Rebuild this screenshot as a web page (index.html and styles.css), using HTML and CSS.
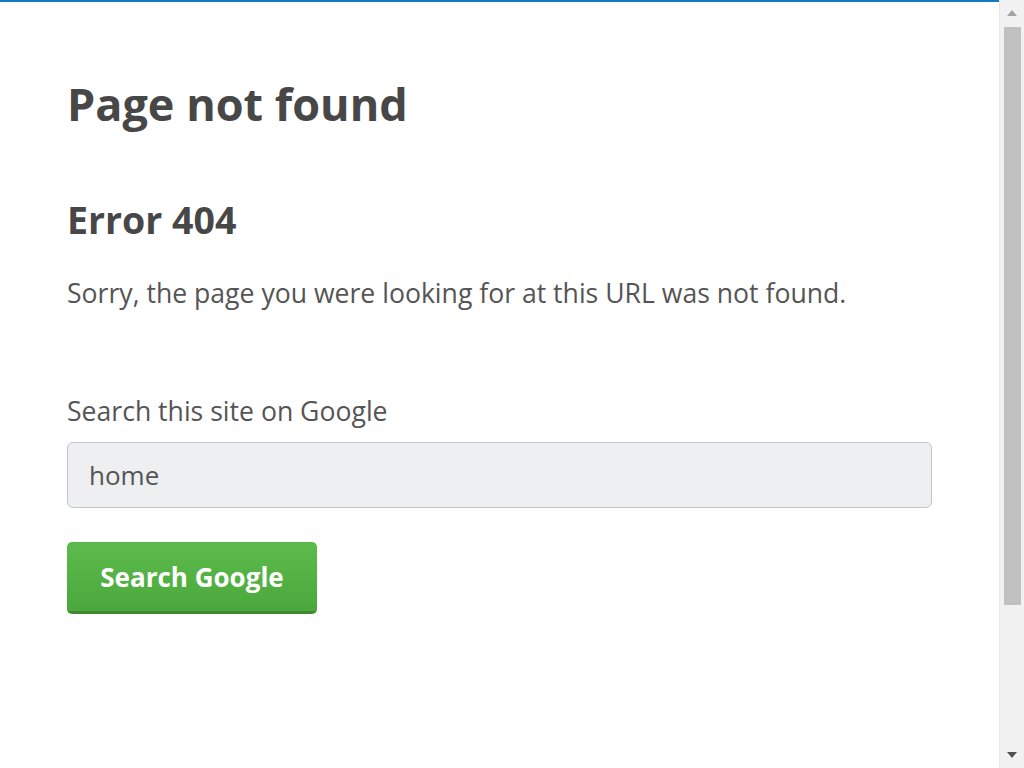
FILE: index.html
```html
<!DOCTYPE html>
<html lang="en">
<head>
<meta charset="utf-8">
<title>Page not found</title>
<link rel="stylesheet" href="styles.css">
</head>
<body>
<main class="page">
  <h1 class="title">Page not found</h1>
  <h2 class="subtitle">Error 404</h2>
  <p class="message">Sorry, the page you were looking for at this URL was not found.</p>
  <form class="search">
    <label class="search-label" for="q">Search this site on Google</label>
    <input class="search-input" id="q" type="text" value="home">
    <button class="search-button" type="button">Search Google</button>
  </form>
</main>
<div class="scrollbar" aria-hidden="true">
  <svg class="arrow arrow-up" width="12" height="8" viewBox="0 0 12 8"><path d="M6 1 L11 7 L1 7 Z" fill="#a3a3a3"/></svg>
  <div class="thumb"></div>
  <div class="track-rest"></div>
  <svg class="arrow arrow-down" width="12" height="8" viewBox="0 0 12 8"><path d="M1 1 L11 1 L6 7 Z" fill="#505050"/></svg>
</div>
</body>
</html>
```

FILE: styles.css
```css
html, body {
  margin: 0;
  padding: 0;
}

body {
  border-top: 2px solid #1479c4;
  font-family: "Open Sans", "Noto Sans", sans-serif;
  color: #555;
  background: #fff;
}

.page {
  width: 865px;
  padding: 0 0 0 67px;
}

.title {
  margin: 0;
  padding-top: 74px;
  font-size: 45px;
  line-height: 56px;
  font-weight: 700;
  color: #474747;
}

.subtitle {
  margin: 0;
  padding-top: 65px;
  font-size: 37.5px;
  line-height: 46px;
  font-weight: 700;
  color: #474747;
}

.message {
  margin: 0;
  padding-top: 33px;
  font-size: 26.6px;
  line-height: 34px;
}

.search {
  display: flex;
  flex-direction: column;
  align-items: flex-start;
  padding-top: 84px;
}

.search-label {
  font-size: 26.6px;
  line-height: 34px;
}

.search-input {
  box-sizing: border-box;
  width: 865px;
  height: 66px;
  margin-top: 14px;
  padding: 0 21px;
  border: 1px solid #c3c5c8;
  border-radius: 6px;
  background: #eeeff1;
  font-family: inherit;
  font-size: 26px;
  color: #555;
  outline: none;
}

.search-button {
  box-sizing: border-box;
  width: 250px;
  height: 72px;
  margin-top: 34px;
  border: none;
  border-bottom: 3px solid #3f8a2f;
  border-radius: 5px;
  background: linear-gradient(#5dbb4d, #4ba83c);
  color: #fff;
  font-family: inherit;
  font-size: 26px;
  font-weight: 700;
  cursor: pointer;
}

.scrollbar {
  position: fixed;
  top: 0;
  right: 0;
  bottom: 0;
  width: 24px;
  background: #f1f1f1;
  border-left: 1px solid #e8e8e8;
  display: flex;
  flex-direction: column;
  align-items: center;
}

.arrow-up {
  margin-top: 9px;
}

.thumb {
  width: 17px;
  height: 578px;
  margin-top: 10px;
  background: #c1c1c1;
}

.track-rest {
  flex: 1;
}

.arrow-down {
  margin-bottom: 9px;
}
```
